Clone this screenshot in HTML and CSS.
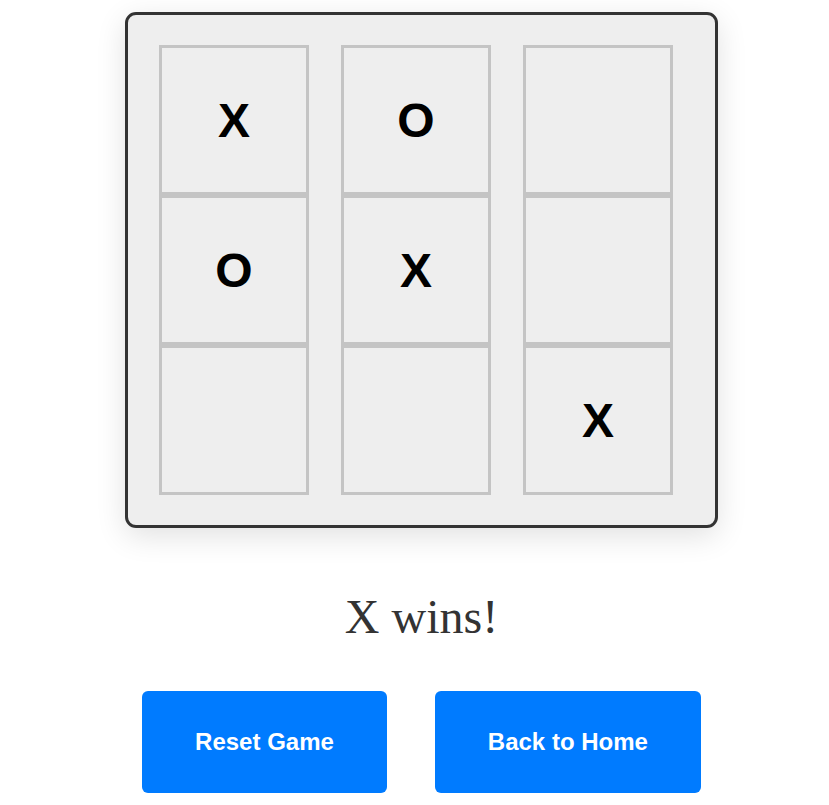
FILE: index.html
```html
<!DOCTYPE html>
<html lang="en">
<head>
<meta charset="utf-8">
<title>Tic Tac Toe</title>
<link rel="stylesheet" href="styles.css">
</head>
<body>
<main class="game">
  <div class="board">
    <div class="cell">X</div>
    <div class="cell">O</div>
    <div class="cell"></div>
    <div class="cell">O</div>
    <div class="cell">X</div>
    <div class="cell"></div>
    <div class="cell"></div>
    <div class="cell"></div>
    <div class="cell">X</div>
  </div>
  <h2 class="status">X wins!</h2>
  <div class="actions">
    <button class="btn">Reset Game</button>
    <button class="btn">Back to Home</button>
  </div>
</main>
</body>
</html>
```

FILE: styles.css
```css
html, body {
  margin: 0;
  padding: 0;
  background: #ffffff;
}

.game {
  display: flex;
  flex-direction: column;
  align-items: center;
  padding: 12px 0 0 14px;
}

.board {
  display: grid;
  grid-template-columns: repeat(3, 150px);
  grid-auto-rows: 150px;
  column-gap: 32px;
  row-gap: 0;
  padding: 30px 42px 30px 31px;
  background: #eeeeee;
  border: 3px solid #333333;
  border-radius: 11px;
  box-shadow: 0 8px 30px rgba(0, 0, 0, 0.12);
}

.cell {
  box-sizing: border-box;
  border: 3px solid #c4c4c4;
  display: flex;
  align-items: center;
  justify-content: center;
  font-family: "Liberation Sans", Arial, sans-serif;
  font-weight: bold;
  font-size: 48px;
  color: #000000;
}

.status {
  margin: 61px 0 0 0;
  font-family: "Liberation Serif", "Times New Roman", serif;
  font-weight: normal;
  font-size: 48px;
  line-height: normal;
  color: #333333;
}

.actions {
  display: flex;
  gap: 48px;
  margin-top: 47px;
}

.btn {
  border: none;
  border-radius: 6px;
  background: #007bff;
  color: #ffffff;
  font-family: "Liberation Sans", Arial, sans-serif;
  font-weight: bold;
  font-size: 24px;
  line-height: 28px;
  padding: 37px 53px;
  cursor: pointer;
}
```
